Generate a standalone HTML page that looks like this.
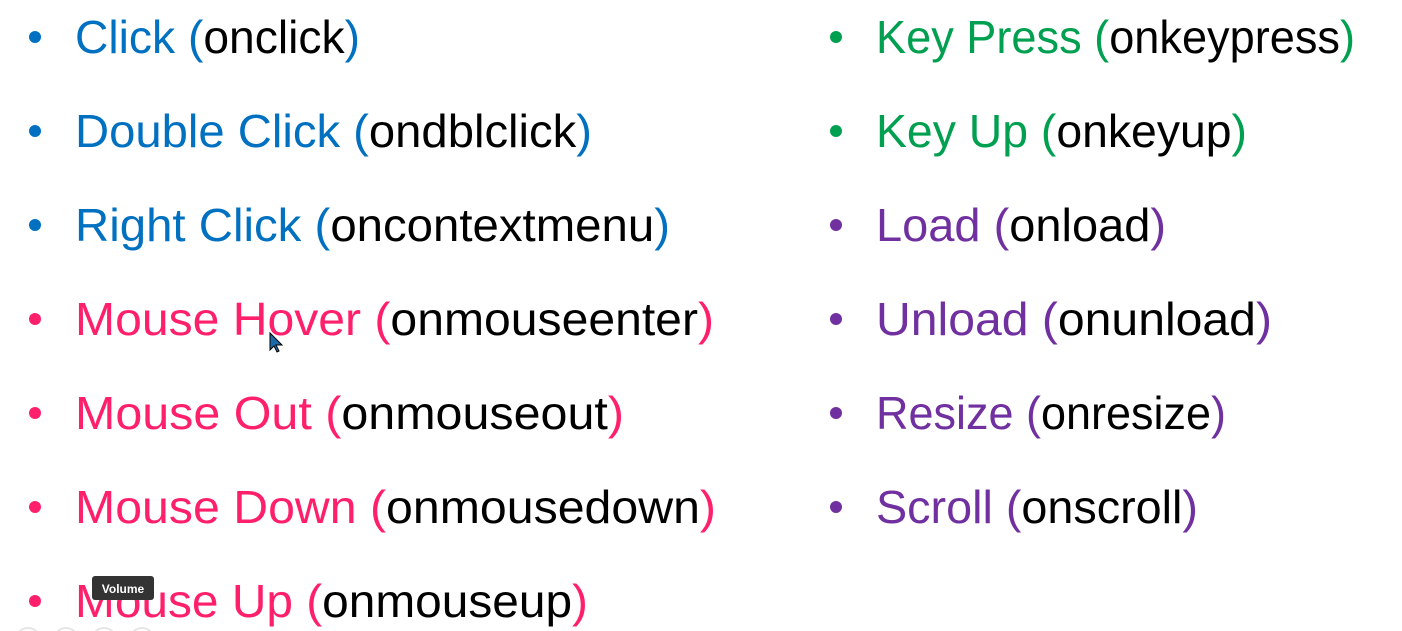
<!DOCTYPE html>
<html><head><meta charset="utf-8"><style>
html,body{margin:0;padding:0;background:#fff;width:1402px;height:631px;overflow:hidden}
svg{display:block}
text{font-family:"Liberation Sans",sans-serif;font-size:46px}
</style></head><body>
<svg width="1402" height="631" viewBox="0 0 1402 631">
<g fill="#0070c0">
<circle cx="35" cy="37" r="6"/><circle cx="35" cy="131" r="6"/><circle cx="35" cy="225" r="6"/>
</g>
<g fill="#ff1f6b">
<circle cx="35" cy="319" r="6"/><circle cx="35" cy="413" r="6"/><circle cx="35" cy="507" r="6"/><circle cx="35" cy="601" r="6"/>
</g>
<g fill="#00a050"><circle cx="836" cy="37" r="6"/><circle cx="836" cy="131" r="6"/></g>
<g fill="#7030a0"><circle cx="836" cy="225" r="6"/><circle cx="836" cy="319" r="6"/><circle cx="836" cy="413" r="6"/><circle cx="836" cy="507" r="6"/></g>

<text x="75" y="53" textLength="285" lengthAdjust="spacingAndGlyphs" fill="#0070c0">Click (<tspan fill="#000">onclick</tspan>)</text>
<text x="75" y="147" textLength="517" lengthAdjust="spacingAndGlyphs" fill="#0070c0">Double Click (<tspan fill="#000">ondblclick</tspan>)</text>
<text x="75" y="241" textLength="595" lengthAdjust="spacingAndGlyphs" fill="#0070c0">Right Click (<tspan fill="#000">oncontextmenu</tspan>)</text>
<text x="75" y="335" textLength="639" lengthAdjust="spacingAndGlyphs" fill="#ff1f6b">Mouse Hover (<tspan fill="#000">onmouseenter</tspan>)</text>
<text x="75" y="429" textLength="549" lengthAdjust="spacingAndGlyphs" fill="#ff1f6b">Mouse Out (<tspan fill="#000">onmouseout</tspan>)</text>
<text x="75" y="523" textLength="641" lengthAdjust="spacingAndGlyphs" fill="#ff1f6b">Mouse Down (<tspan fill="#000">onmousedown</tspan>)</text>
<text x="75" y="617" textLength="513" lengthAdjust="spacingAndGlyphs" fill="#ff1f6b">Mouse Up (<tspan fill="#000">onmouseup</tspan>)</text>

<text x="876" y="53" textLength="479" lengthAdjust="spacingAndGlyphs" fill="#00a050">Key Press (<tspan fill="#000">onkeypress</tspan>)</text>
<text x="876" y="147" textLength="371" lengthAdjust="spacingAndGlyphs" fill="#00a050">Key Up (<tspan fill="#000">onkeyup</tspan>)</text>
<text x="876" y="241" textLength="290" lengthAdjust="spacingAndGlyphs" fill="#7030a0">Load (<tspan fill="#000">onload</tspan>)</text>
<text x="876" y="335" textLength="396" lengthAdjust="spacingAndGlyphs" fill="#7030a0">Unload (<tspan fill="#000">onunload</tspan>)</text>
<text x="876" y="429" textLength="350" lengthAdjust="spacingAndGlyphs" fill="#7030a0">Resize (<tspan fill="#000">onresize</tspan>)</text>
<text x="876" y="523" textLength="322" lengthAdjust="spacingAndGlyphs" fill="#7030a0">Scroll (<tspan fill="#000">onscroll</tspan>)</text>

<path d="M270 333 L270 350 L274 346 L277 352 L279 351 L276 345 L282 345 Z" fill="#1a6aa8" stroke="#000" stroke-width="1"/>

<rect x="92" y="576" width="62" height="24" rx="3" fill="#333"/>
<text x="123" y="593" text-anchor="middle" style="font-size:12px;font-weight:bold" fill="#fff">Volume</text>

<g fill="none" stroke="#e6e6e6" stroke-width="2">
<circle cx="28" cy="640" r="12"/><circle cx="66" cy="640" r="12"/><circle cx="104" cy="640" r="12"/><circle cx="142" cy="640" r="12"/>
</g>
</svg>
</body></html>
